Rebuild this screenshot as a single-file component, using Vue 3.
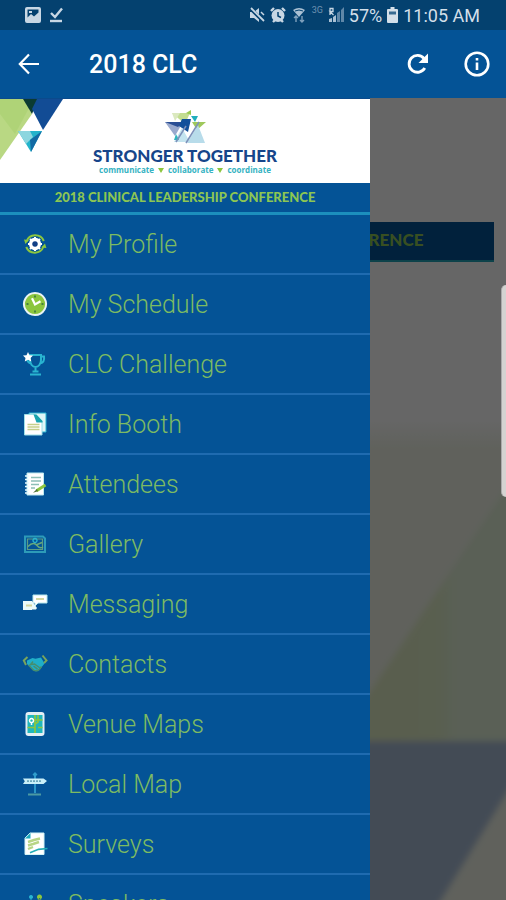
<script setup>
const G = '#8cc63f'
const T = '#29b4d0'
const W = '#ffffff'

const items = [
  {
    label: 'My Profile',
    shapes: [
      { d: 'M3.5 9.5A9.3 9.3 0 0 1 20.8 9M20.5 14.5A9.3 9.3 0 0 1 3.2 15', s: G, w: 2 },
      { d: 'M1 7.5l5 .5-3.6 4zM23.4 16l-5-.6 3.6-4z', f: G },
      { d: 'M12 7.5a4.5 4.5 0 1 0 .01 0z', s: W, w: 3.4, f: '#123f86' },
      { d: 'M12 5v2M12 17v2M5 12h2M17 12h2M7 7l1.5 1.5M17 7l-1.5 1.5M7 17l1.5-1.5M17 17l-1.5-1.5', s: W, w: 2 },
    ],
  },
  {
    label: 'My Schedule',
    shapes: [
      { d: 'M12 1a11 11 0 1 0 .01 0z', f: G, s: '#eaf3f4', w: 2 },
      { d: 'M12 3.5v2M12 18.5v2M3.5 12h2M18.5 12h2', s: '#2e6a3c', w: 1.4 },
      { d: 'M9 6.2l3 6.3 5.5-3.2', s: W, w: 2.2 },
    ],
  },
  {
    label: 'CLC Challenge',
    shapes: [
      { d: 'M7 3h11v5c0 4-2.5 7-5.5 7S7 12 7 8zM18 4.5h3c.6 4-1.2 6.5-4 7M7 7H4c.3 2.500 1.500 4 4 4.500M12.500 15v4M9.500 19.500h6M7 22.500h11', s: T, w: 2 },
      { d: 'M5 0l1.500 3.200L10 3.600 7.500 6l.8 3.500L5 7.800 1.800 9.500l.7-3.500L0 3.600l3.500-.4z', f: W },
    ],
  },
  {
    label: 'Info Booth',
    shapes: [
      { d: 'M6 1h17v19H6z', f: '#dff5f7', s: T, w: 1 },
      { d: 'M1.500 2.500H12l7 6.500v14H1.500z', f: W, s: '#9ee0e8', w: 1 },
      { d: 'M10.500 2.500h3l6 6.500v1.500h-6z', f: '#17a3ae' },
      { d: 'M4.500 12.500h12M4.500 15h12M4.500 17.500h12', s: '#c5cf8b', w: 1.6 },
    ],
  },
  {
    label: 'Attendees',
    shapes: [
      { d: 'M4 1h16.500v22H4z', f: W, s: '#bdeaf0', w: 1 },
      { d: 'M2 4h4M2 7.500h4M2 11h4M2 14.500h4M2 18h4M2 21h4', s: '#e8fbff', w: 1.4 },
      { d: 'M8 5.500h10M8 9h10M8 12.500h8M8 16h4', s: '#8dbfb6', w: 1.3 },
      { d: 'M22.500 13l-9 5.800', s: G, w: 3 },
      { d: 'M14 17l-4 3.800 5-1.600z', f: '#4c6f35' },
    ],
  },
  {
    label: 'Gallery',
    shapes: [
      { d: 'M2 4.500h18l2 2V20H2z', s: '#2d9bb8', w: 2 },
      { d: 'M4.500 7h15v10.500h-15z', s: '#5d9c84', w: 1.2 },
      { d: 'M5 14.500c4-4 7-3.500 9-1s4 3 6 1.500M13 13l6-2.500', s: '#69a97b', w: 1.4 },
      { d: 'M12 6.500a2 2 0 1 0 .01 0z', s: T, w: 1.4 },
    ],
  },
  {
    label: 'Messaging',
    shapes: [
      { d: 'M10 3h14v8h-9l-3 3v-3h-2z', f: W, s: '#b5e8ee', w: 1 },
      { d: 'M0 9h9l5 7-1 1.500H9V18H0z', f: '#eafafa' },
      { d: 'M13 7h8M3 13.500h6', s: '#d3d6a0', w: 2 },
    ],
  },
  {
    label: 'Contacts',
    shapes: [
      { d: 'M4 8.500L9.500 6l3 .8L18 5.500l3.500 6-5 6.500c-2 1.500-4.500 1.800-6.500 0L4 12z', f: '#20aec8' },
      { d: 'M4.500 5L.8 8.500 3 13M19.500 3.500l4 5-2.500 2.500', s: '#7aa45b', w: 2 },
      { d: 'M5.500 13l5 5.200c2 1 4.500.5 6-1l2-2.700M10 9.500l-2.500 3.200 4-.7 5.500 4M10.500 14l4 3.200', s: '#468d6d', w: 1.500 },
    ],
  },
  {
    label: 'Venue Maps',
    shapes: [
      { d: 'M5.500 0h13a3 3 0 0 1 3 3v18a3 3 0 0 1-3 3h-13a3 3 0 0 1-3-3V3a3 3 0 0 1 3-3z', f: '#e4eef5' },
      { d: 'M4.500 3h15v18h-15z', f: '#20b7bd' },
      { d: 'M12 3v18M15 3v7l-3 2M4.500 15.500H12M12 8h7.500M15 15.500h4.500', s: G, w: 1.7 },
      { d: 'M8.500 6.500a2 2 0 1 0 .01 0zM8.500 11v2', s: W, w: 1.500 },
    ],
  },
  {
    label: 'Local Map',
    shapes: [
      { d: 'M12 1v20', s: '#2f9dcc', w: 1.8 },
      { d: 'M12 0l2.500 2.500L12 5 9.500 2.500z', f: '#2f9dcc' },
      { d: 'M0 6.500h20.500L24 9l-3.500 3H0l1.800-2.800z', f: '#c9eff8' },
      { d: 'M4 9.200h15', s: '#6da9bd', w: 1.8, dash: '2 1' },
      { d: 'M5 22.500h13', s: '#4c9aa2', w: 2 },
    ],
  },
  {
    label: 'Surveys',
    shapes: [
      { d: 'M7 1h14v21.500H2V6z', f: W, s: '#d1f3f7', w: 1 },
      { d: 'M2 6.500L7.500 1v5.500z', f: '#1ca9bd' },
      { d: 'M5 10l6-2 6-1.500M5 13.500l5-1.500 6-2M5 17l5-2', s: '#b7d585', w: 2.4 },
      { d: 'M24.500 16.500l-9 .8L7 20.800', s: '#23adb6', w: 1.7 },
    ],
  },
  {
    label: 'Speakers',
    shapes: [
      { d: 'M8 3a2 2 0 1 0 .01 0zM5 10l3-3 3 3v12H5z', f: T },
      { d: 'M16.500 2.500a2.500 2.500 0 1 0 .01 0zM12.500 10l4-4 4 4v12h-8z', f: G },
    ],
  },
]
</script>

<template>
  <div class="app">
    <div class="status">
      <div class="status-group">
        <svg class="glyph" viewBox="0 0 16 16">
          <path fill-rule="evenodd" fill="#c8d7e4" d="M2 0h12a2 2 0 0 1 2 2v12a2 2 0 0 1-2 2H2a2 2 0 0 1-2-2V2a2 2 0 0 1 2-2zM2.500 2.500v8L6 7l3 2.500 4.500-4v-3z" />
          <path d="M2 13.500l4-4.500 3 2.500 5-4.500v6.500z" fill="#c8d7e4" />
          <path d="M4 5h3" stroke="#c8d7e4" stroke-width="2" />
        </svg>
        <svg class="glyph" viewBox="0 0 16 16" fill="none" stroke="#c8d7e4">
          <path d="M3 6l4 4 7-8.500" stroke-width="2.400" />
          <path d="M2 14h12" stroke-width="2.400" />
        </svg>
      </div>
      <div class="status-group right">
        <svg class="glyph" viewBox="0 0 16 16">
          <path d="M1 5h4l5-4v14l-5-4H1z" fill="#c8d7e4" />
          <path d="M1 1l14 14" stroke="#04416f" stroke-width="3.500" />
          <path d="M2 1l13 13" stroke="#c8d7e4" stroke-width="1.800" />
          <path d="M12 5l3 3" stroke="#c8d7e4" stroke-width="1.500" />
        </svg>
        <svg class="glyph" viewBox="0 0 16 16" fill="none" stroke="#c8d7e4">
          <circle cx="8" cy="8.500" r="6.500" fill="#c8d7e4" stroke="none" />
          <path d="M1 4l3-3M15 4l-3-3M3 15l2-2M13 15l-2-2" stroke-width="2.400" />
          <path d="M8 5v4l3 1.500" stroke="#04416f" stroke-width="1.500" />
        </svg>
        <svg class="glyph dim" viewBox="0 0 16 16">
          <path d="M2 3q6-4 12 0L8 10z" fill="#aac1d4" />
          <path d="M4 4q4-2 8 0" stroke="#04416f" fill="none" />
          <path d="M5 9v6M3 11l2-2 2 2M11 9v6M9 13l2 2 2-2" stroke="#7fa1bd" fill="none" stroke-width="1.400" />
        </svg>
        <span class="net">3G</span>
        <svg class="glyph" viewBox="0 0 16 16">
          <path d="M1 15v-3l3-1v4zM5 15v-5l3-2v7z" fill="#aac1d4" />
          <path d="M9 15V6l3-2v11zM13 15V3l3-3v15z" fill="#5f87a8" />
          <path d="M2 8V1.500h3v3H2l3.500 3.500" stroke="#c8d7e4" fill="none" stroke-width="1.300" />
        </svg>
        <span>57%</span>
        <svg class="battery" viewBox="0 0 11 16">
          <path d="M3.500 0h4v2H10a1 1 0 0 1 1 1v12a1 1 0 0 1-1 1H1a1 1 0 0 1-1-1V3a1 1 0 0 1 1-1h2.500z" fill="#d3dfe9" />
          <path d="M2 4.500h7v3H2z" fill="#376a91" />
        </svg>
        <span>11:05 AM</span>
      </div>
    </div>

    <header class="bar">
      <button class="tool" aria-label="Back">
        <svg viewBox="0 0 24 24" fill="none" stroke="#fff" stroke-width="2.200"><path d="M22 12H3.500M12 2.500L2.800 12l9.200 9.500" /></svg>
      </button>
      <h1>2018 CLC</h1>
      <button class="tool" aria-label="Refresh">
        <svg viewBox="0 0 24 24"><path d="M18.800 16A8.400 8.400 0 1 1 18 6.500" fill="none" stroke="#fff" stroke-width="2.800" /><path d="M22 1.500V11h-9.500z" fill="#fff" /></svg>
      </button>
      <button class="tool info" aria-label="Information">
        <svg viewBox="0 0 26 26" fill="none" stroke="#fff" stroke-width="2.600"><circle cx="13" cy="13" r="11.300" /><path d="M13 11.500v7.500M13 7v2.600" /></svg>
      </button>
    </header>

    <div class="stage">
      <main class="page">
        <svg class="backdrop" viewBox="0 0 506 802" preserveAspectRatio="none">
          <defs>
            <linearGradient id="fade" x1="0" y1="0" x2="0" y2="1">
              <stop offset="0" stop-color="#fff" />
              <stop offset="0.060" stop-color="#eff3e6" />
              <stop offset="1" stop-color="#eff3e6" />
            </linearGradient>
            <linearGradient id="leaf" x1="370" y1="0" x2="506" y2="0" gradientUnits="userSpaceOnUse">
              <stop offset="0.100" stop-color="#dfebc2" />
              <stop offset="0.500" stop-color="#dfedc6" />
              <stop offset="0.620" stop-color="#e0f0d6" />
            </linearGradient>
            <filter id="soft"><feGaussianBlur stdDeviation="3" /></filter>
          </defs>
          <rect y="322" width="506" height="480" fill="url(#fade)" />
          <g filter="url(#soft)">
            <path d="M520 370L350 624v22h170z" fill="url(#leaf)" />
            <path d="M-10 643h530v30L430 820H-10z" fill="#a8bcd5" />
          </g>
        </svg>
        <div class="page-banner">2018 CLINICAL LEADERSHIP CONFERENCE</div>
      </main>
      <div class="scrim"></div>
      <div class="thumb"></div>

      <aside class="drawer">
        <div class="brand">
          <svg class="corner" viewBox="0 0 63 62">
            <path d="M0 0h24l8 15L0 61z" fill="#b9d883" />
            <path d="M0 0h24l5 9-14 26L0 15z" fill="#a8d06f" opacity="0.600" />
            <path d="M23 0h15l-6 15z" fill="#0b3b32" />
            <path d="M37 0h26L43 31 32 10z" fill="#124c95" />
            <path d="M18 32h24L31 53z" fill="#22b3cb" />
            <path d="M18 32h12l3 6-7 7z" fill="#8cd6df" />
            <path d="M42 32L31 53l-1-12z" fill="#126aa4" />
          </svg>
          <svg class="emblem" viewBox="0 0 42 36">
            <path d="M8 3h18l-5 11z" fill="#c3dd91" /><path d="M8 3h8l-5 8z" fill="#dbe9bf" />
            <path d="M22 3l5-3v5z" fill="#99c951" /><path d="M27 6h7l-3 6z" fill="#20aebc" />
            <path d="M1 12h18l-8 14z" fill="#99a9cd" /><path d="M1 12h18l-5 5z" fill="#2a4e94" />
            <path d="M18 9h9l-3 13-9-6z" fill="#11509a" /><path d="M28 12h14l-9 8z" fill="#9fc85b" />
            <path d="M18 18l8 14H10z" fill="#c4e4ef" /><path d="M34 15l7 18H23z" fill="#b8dcea" />
            <path d="M12 24l3 6h-5z" fill="#30b5bd" /><path d="M35 12L22 33M22 16L12 32" stroke="#7d91ba" stroke-width="1.500" />
          </svg>
          <div class="name">STRONGER TOGETHER</div>
          <div class="motto">communicate <i></i> collaborate <i></i> coordinate</div>
        </div>
        <div class="event">2018 CLINICAL LEADERSHIP CONFERENCE</div>
        <nav>
          <a v-for="item in items" :key="item.label" class="row" href="#">
            <svg class="icon" viewBox="0 0 24 24">
              <path
                v-for="(p, i) in item.shapes"
                :key="i"
                :d="p.d"
                :fill="p.f || 'none'"
                :stroke="p.s || 'none'"
                :stroke-width="p.w || 0"
                :stroke-dasharray="p.dash"
              />
            </svg>
            <span>{{ item.label }}</span>
          </a>
        </nav>
      </aside>
    </div>
  </div>
</template>

<style>
body {
  margin: 0;
}
</style>

<style scoped>
.app {
  display: flex;
  flex-direction: column;
  height: 100vh;
  overflow: hidden;
  font-family: Roboto, sans-serif;
  background: #045396;
}
.status {
  display: flex;
  justify-content: space-between;
  align-items: center;
  height: 30px;
  flex: none;
  padding: 0 26px 0 25px;
  background: #04416f;
  color: #d3dfe9;
  font-size: 18px;
}
.status-group {
  display: flex;
  align-items: center;
  gap: 7px;
}
.right {
  gap: 5px;
}
.glyph {
  width: 16px;
  height: 16px;
}
.battery {
  width: 11px;
  height: 16px;
}
.net {
  align-self: flex-start;
  font-size: 9px;
  color: #6f93b1;
}
.bar {
  display: flex;
  align-items: center;
  height: 68px;
  flex: none;
  padding: 0 16px 0 17px;
  background: #045396;
}
.bar h1 {
  flex: 1;
  margin: 0;
  padding-left: 48px;
  font-size: 25px;
  font-weight: 500;
  color: #fff;
}
.tool {
  display: flex;
  padding: 0;
  border: 0;
  background: none;
}
.tool svg {
  width: 24px;
  height: 24px;
}
.info {
  margin-left: 34px;
}
.info svg {
  width: 26px;
  height: 26px;
}
.stage {
  position: relative;
  flex: 1;
  min-height: 0;
  overflow: hidden;
}
.page {
  height: 100%;
  box-sizing: border-box;
  padding: 124px 12px 0;
  background: #fff;
}
.backdrop {
  position: absolute;
  inset: 0;
  width: 100%;
  height: 100%;
}
.page-banner {
  position: relative;
  height: 38px;
  line-height: 36px;
  border-bottom: 2px solid #22a5b8;
  background: #045396;
  color: #8cc653;
  font: 900 17px/36px Lato, sans-serif;
  text-align: center;
  white-space: nowrap;
}
.scrim {
  position: absolute;
  inset: 0;
  background: rgba(0, 0, 0, 0.6);
}
.thumb {
  position: absolute;
  top: 187px;
  right: 0;
  width: 4px;
  height: 212px;
  border-radius: 5px 0 0 5px;
  border-left: 1px solid #aaa;
  background: #d4d3d1;
}
.drawer {
  position: absolute;
  top: 0;
  bottom: 0;
  left: 0;
  width: calc(100% - 136px);
  overflow: hidden;
  background: #045396;
}
.brand {
  position: relative;
  display: flex;
  flex-direction: column;
  align-items: center;
  height: 85px;
  box-sizing: border-box;
  padding-top: 11px;
  border-top: 1px solid #0b4a8c;
  background: #fff;
}
.corner {
  position: absolute;
  top: 0;
  left: 0;
  width: 63px;
  height: 62px;
}
.emblem {
  width: 42px;
  height: 36px;
}
.name {
  font: 900 17px/20px Lato, sans-serif;
  color: #16458a;
  white-space: nowrap;
}
.motto {
  display: flex;
  align-items: center;
  gap: 4px;
  font: 700 8px/8px "Open Sans", sans-serif;
  color: #35b2c2;
  white-space: nowrap;
}
.motto i {
  border: 3px solid transparent;
  border-top: 5px solid #8cc63f;
  border-bottom: 0;
}
.event {
  height: 29px;
  border-bottom: 3px solid #1c8fbd;
  font: 900 13px/28px Lato, sans-serif;
  color: #8cc653;
  text-align: center;
  white-space: nowrap;
}
.row {
  display: flex;
  align-items: center;
  gap: 21px;
  height: 60px;
  box-sizing: border-box;
  padding-left: 23px;
  border-bottom: 2px solid #1f6bb0;
  color: #7dbb62;
  font-size: 25px;
  font-weight: 300;
  text-decoration: none;
  white-space: nowrap;
}
.icon {
  width: 24px;
  height: 24px;
  flex: none;
  overflow: visible;
}
</style>
